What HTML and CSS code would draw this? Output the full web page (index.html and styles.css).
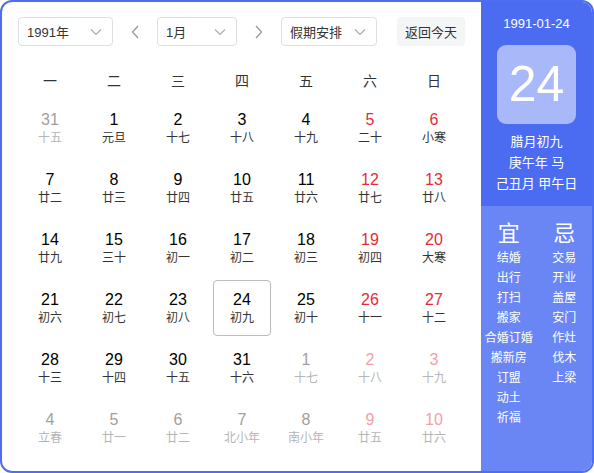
FILE: index.html
```html
<!DOCTYPE html>
<html lang="zh-CN">
<head>
<meta charset="utf-8">
<title>万年历</title>
<link rel="stylesheet" href="styles.css">
</head>
<body>
<div class="calendar">
  <div class="main">
    <div class="toolbar">
      <div class="select sel-year"><span>1991年</span><svg class="chev" viewBox="0 0 12 8" width="12" height="8"><path d="M1 1.5 L6 6.5 L11 1.5" fill="none" stroke="#a8abb2" stroke-width="1.2"/></svg></div>
      <div class="arrow"><svg viewBox="0 0 8 14" width="8" height="14"><path d="M7 1 L1.5 7 L7 13" fill="none" stroke="#999" stroke-width="1.3"/></svg></div>
      <div class="select sel-month"><span>1月</span><svg class="chev" viewBox="0 0 12 8" width="12" height="8"><path d="M1 1.5 L6 6.5 L11 1.5" fill="none" stroke="#a8abb2" stroke-width="1.2"/></svg></div>
      <div class="arrow"><svg viewBox="0 0 8 14" width="8" height="14"><path d="M1 1 L6.5 7 L1 13" fill="none" stroke="#999" stroke-width="1.3"/></svg></div>
      <div class="select sel-holiday"><span>假期安排</span><svg class="chev" viewBox="0 0 12 8" width="12" height="8"><path d="M1 1.5 L6 6.5 L11 1.5" fill="none" stroke="#a8abb2" stroke-width="1.2"/></svg></div>
      <div class="today-btn">返回今天</div>
    </div>
    <div class="weekdays">
      <div>一</div><div>二</div><div>三</div><div>四</div><div>五</div><div>六</div><div>日</div>
    </div>
    <div class="days">
      <div class="day other"><div class="in"><b>31</b><i>十五</i></div></div>
      <div class="day"><div class="in"><b>1</b><i>元旦</i></div></div>
      <div class="day"><div class="in"><b>2</b><i>十七</i></div></div>
      <div class="day"><div class="in"><b>3</b><i>十八</i></div></div>
      <div class="day"><div class="in"><b>4</b><i>十九</i></div></div>
      <div class="day we"><div class="in"><b>5</b><i>二十</i></div></div>
      <div class="day we"><div class="in"><b>6</b><i>小寒</i></div></div>

      <div class="day"><div class="in"><b>7</b><i>廿二</i></div></div>
      <div class="day"><div class="in"><b>8</b><i>廿三</i></div></div>
      <div class="day"><div class="in"><b>9</b><i>廿四</i></div></div>
      <div class="day"><div class="in"><b>10</b><i>廿五</i></div></div>
      <div class="day"><div class="in"><b>11</b><i>廿六</i></div></div>
      <div class="day we"><div class="in"><b>12</b><i>廿七</i></div></div>
      <div class="day we"><div class="in"><b>13</b><i>廿八</i></div></div>

      <div class="day"><div class="in"><b>14</b><i>廿九</i></div></div>
      <div class="day"><div class="in"><b>15</b><i>三十</i></div></div>
      <div class="day"><div class="in"><b>16</b><i>初一</i></div></div>
      <div class="day"><div class="in"><b>17</b><i>初二</i></div></div>
      <div class="day"><div class="in"><b>18</b><i>初三</i></div></div>
      <div class="day we"><div class="in"><b>19</b><i>初四</i></div></div>
      <div class="day we"><div class="in"><b>20</b><i>大寒</i></div></div>

      <div class="day"><div class="in"><b>21</b><i>初六</i></div></div>
      <div class="day"><div class="in"><b>22</b><i>初七</i></div></div>
      <div class="day"><div class="in"><b>23</b><i>初八</i></div></div>
      <div class="day selected"><div class="in"><b>24</b><i>初九</i></div></div>
      <div class="day"><div class="in"><b>25</b><i>初十</i></div></div>
      <div class="day we"><div class="in"><b>26</b><i>十一</i></div></div>
      <div class="day we"><div class="in"><b>27</b><i>十二</i></div></div>

      <div class="day"><div class="in"><b>28</b><i>十三</i></div></div>
      <div class="day"><div class="in"><b>29</b><i>十四</i></div></div>
      <div class="day"><div class="in"><b>30</b><i>十五</i></div></div>
      <div class="day"><div class="in"><b>31</b><i>十六</i></div></div>
      <div class="day other"><div class="in"><b>1</b><i>十七</i></div></div>
      <div class="day other we"><div class="in"><b>2</b><i>十八</i></div></div>
      <div class="day other we"><div class="in"><b>3</b><i>十九</i></div></div>

      <div class="day other"><div class="in"><b>4</b><i>立春</i></div></div>
      <div class="day other"><div class="in"><b>5</b><i>廿一</i></div></div>
      <div class="day other"><div class="in"><b>6</b><i>廿二</i></div></div>
      <div class="day other"><div class="in"><b>7</b><i>北小年</i></div></div>
      <div class="day other"><div class="in"><b>8</b><i>南小年</i></div></div>
      <div class="day other we"><div class="in"><b>9</b><i>廿五</i></div></div>
      <div class="day other we"><div class="in"><b>10</b><i>廿六</i></div></div>
    </div>
  </div>
  <div class="side">
    <div class="side-top">
      <div class="side-date">1991-01-24</div>
      <div class="big-day">24</div>
      <div class="lunar-info">
        <div>腊月初九</div>
        <div>庚午年 马</div>
        <div>己丑月 甲午日</div>
      </div>
    </div>
    <div class="side-bottom">
      <div class="col">
        <div class="col-title">宜</div>
        <div>结婚</div><div>出行</div><div>打扫</div><div>搬家</div><div>合婚订婚</div><div>搬新房</div><div>订盟</div><div>动土</div><div>祈福</div>
      </div>
      <div class="col">
        <div class="col-title">忌</div>
        <div>交易</div><div>开业</div><div>盖屋</div><div>安门</div><div>作灶</div><div>伐木</div><div>上梁</div>
      </div>
    </div>
  </div>
</div>
</body>
</html>
```
FILE: styles.css
```css
* { box-sizing: border-box; }
html, body { margin: 0; padding: 0; background: #fff; }
body {
  font-family: "Liberation Sans", "Noto Sans CJK SC", sans-serif;
  color: #333;
}
.calendar {
  width: 594px;
  height: 473px;
  border: 2px solid #4e6ef2;
  border-radius: 12px;
  overflow: hidden;
  display: flex;
}
.main {
  width: 479px;
  padding: 15px 0 0 16px;
}
.toolbar {
  display: flex;
  align-items: center;
  height: 29px;
}
.select {
  height: 29px;
  border: 1px solid #dcdfe6;
  border-radius: 4px;
  display: flex;
  align-items: center;
  justify-content: space-between;
  padding: 0 10px 0 8px;
  font-size: 13px;
  color: #333;
}
.sel-year { width: 95px; }
.sel-month { width: 80px; }
.sel-holiday { width: 96px; }
.chev { display: block; }
.arrow {
  width: 44px;
  height: 29px;
  display: flex;
  align-items: center;
  justify-content: center;
}
.arrow svg { display: block; }
.today-btn {
  margin-left: 20px;
  width: 68px;
  height: 29px;
  border-radius: 4px;
  background: #f4f5f7;
  font-size: 13px;
  color: #333;
  display: flex;
  align-items: center;
  justify-content: center;
}
.weekdays {
  margin-top: 16px;
  display: grid;
  grid-template-columns: repeat(7, 64px);
  height: 36px;
  align-items: center;
  text-align: center;
  font-size: 14px;
  color: #333;
}
.days {
  display: grid;
  grid-template-columns: repeat(7, 64px);
  grid-auto-rows: 60px;
}
.day {
  display: flex;
  align-items: center;
  justify-content: center;
}
.day .in {
  width: 58px;
  height: 56px;
  border: 1.5px solid transparent;
  border-radius: 4px;
  display: flex;
  flex-direction: column;
  align-items: center;
  justify-content: center;
}
.day b {
  font-weight: normal;
  font-size: 16px;
  line-height: 20px;
  color: #000;
}
.day i {
  font-style: normal;
  font-size: 12px;
  line-height: 16px;
  color: #333;
}
.day.we b { color: #e42c35; }
.day.other b { color: #a0a0a0; }
.day.other i { color: #b5b5b5; }
.day.other.we b { color: #f2a1a8; }
.day.selected .in { border-color: #bcbcbc; }

.side {
  flex: 1;
  display: flex;
  flex-direction: column;
  color: #fff;
  text-align: center;
}
.side-top {
  background: #4b6cf1;
  padding: 12px 0 12px;
  display: flex;
  flex-direction: column;
  align-items: center;
}
.side-date {
  font-size: 13px;
  line-height: 20px;
}
.big-day {
  margin-top: 11px;
  width: 79px;
  height: 79px;
  border-radius: 9px;
  background: #a8b8f8;
  font-size: 50px;
  line-height: 79px;
  color: #fff;
}
.lunar-info {
  margin-top: 7px;
  font-size: 13px;
  line-height: 21px;
}
.side-bottom {
  flex: 1;
  background: #6a86f4;
  display: grid;
  grid-template-columns: 1fr 1fr;
  padding-top: 14px;
  align-items: start;
}
.col {
  font-size: 12px;
  line-height: 20px;
}
.col-title {
  font-size: 22px;
  line-height: 28px;
}
```
